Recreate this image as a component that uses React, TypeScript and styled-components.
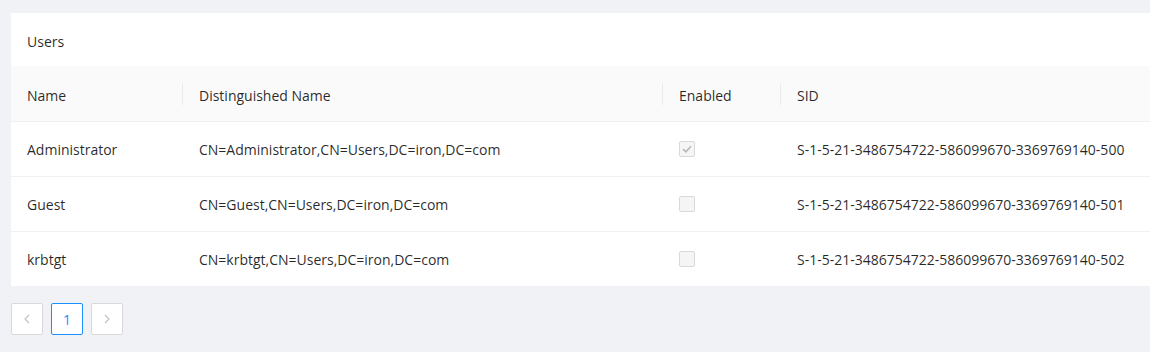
import * as React from 'react';
import styled, { createGlobalStyle } from 'styled-components';

type User = {
  name: string;
  dn: string;
  enabled: boolean;
  sid: string;
};

const users: User[] = [
  {
    name: 'Administrator',
    dn: 'CN=Administrator,CN=Users,DC=iron,DC=com',
    enabled: true,
    sid: 'S-1-5-21-3486754722-586099670-3369769140-500',
  },
  {
    name: 'Guest',
    dn: 'CN=Guest,CN=Users,DC=iron,DC=com',
    enabled: false,
    sid: 'S-1-5-21-3486754722-586099670-3369769140-501',
  },
  {
    name: 'krbtgt',
    dn: 'CN=krbtgt,CN=Users,DC=iron,DC=com',
    enabled: false,
    sid: 'S-1-5-21-3486754722-586099670-3369769140-502',
  },
];

const columns = [
  { title: 'Name', width: 172 },
  { title: 'Distinguished Name', width: 480 },
  { title: 'Enabled', width: 118 },
  { title: 'SID', width: 0 },
];

const GlobalStyle = createGlobalStyle`
  html, body {
    margin: 0;
    background: #f0f2f5;
  }
  body {
    font-family: "Open Sans", "Noto Sans", sans-serif;
    font-size: 14px;
    color: rgba(0, 0, 0, 0.85);
  }
`;

const App: React.FC = () => (
  <Page>
    <GlobalStyle />
    <Card.Container>
      <Card.Head>Users</Card.Head>
      <Table.Grid>
        <Table.HeadRow>
          {columns.map((col, idx) => (
            <Table.HeadCell
              key={`col-${idx}`}
              $width={col.width}
              $divider={idx > 0}
            >
              {col.title}
            </Table.HeadCell>
          ))}
        </Table.HeadRow>
        {users.map((user) => (
          <Table.Row key={user.sid}>
            <Table.Cell $width={columns[0].width}>{user.name}</Table.Cell>
            <Table.Cell $width={columns[1].width}>{user.dn}</Table.Cell>
            <Table.Cell $width={columns[2].width}>
              <Check.Box>
                {user.enabled && (
                  <svg width="10" height="8" viewBox="0 0 10 8">
                    <path
                      d="M1 4.2 L3.8 6.8 L9 1.2"
                      fill="none"
                      stroke="rgba(0,0,0,0.25)"
                      strokeWidth="1.6"
                    />
                  </svg>
                )}
              </Check.Box>
            </Table.Cell>
            <Table.Cell $width={columns[3].width}>{user.sid}</Table.Cell>
          </Table.Row>
        ))}
      </Table.Grid>
    </Card.Container>
    <Pager.Bar>
      <Pager.Item $disabled>
        <svg width="8" height="10" viewBox="0 0 8 10">
          <path d="M6 1 L2 5 L6 9" fill="none" stroke="currentColor" strokeWidth="1.1" />
        </svg>
      </Pager.Item>
      <Pager.Item $active>1</Pager.Item>
      <Pager.Item $disabled>
        <svg width="8" height="10" viewBox="0 0 8 10">
          <path d="M2 1 L6 5 L2 9" fill="none" stroke="currentColor" strokeWidth="1.1" />
        </svg>
      </Pager.Item>
    </Pager.Bar>
  </Page>
);

export default App;

const Page = styled.div`
  padding: 13px 0 0 11px;
`;

const Card = {
  Container: styled.div`
    background: #fff;
  `,
  Head: styled.div`
    height: 53px;
    box-sizing: border-box;
    padding: 5px 16px 0;
    display: flex;
    align-items: center;
    line-height: 22px;
  `,
};

const Table = {
  Grid: styled.div`
    display: flex;
    flex-direction: column;
  `,
  HeadRow: styled.div`
    display: flex;
    height: 56px;
    box-sizing: border-box;
    padding-top: 3px;
    background: #fafafa;
    border-bottom: 1px solid #f0f0f0;
  `,
  Row: styled.div`
    display: flex;
    height: 55px;
    box-sizing: border-box;
    border-bottom: 1px solid #f0f0f0;

    &:last-child {
      height: 54px;
      border-bottom: none;
    }
  `,
  HeadCell: styled.div<{ $width: number; $divider?: boolean }>`
    position: relative;
    box-sizing: border-box;
    flex: ${(p) => (p.$width ? `0 0 ${p.$width}px` : '1 1 auto')};
    display: flex;
    align-items: center;
    padding: 0 16px;

    &::before {
      content: '';
      display: ${(p) => (p.$divider ? 'block' : 'none')};
      position: absolute;
      left: -1px;
      top: calc(50% - 1px);
      width: 1px;
      height: 22px;
      transform: translateY(-50%);
      background: rgba(0, 0, 0, 0.06);
    }
  `,
  Cell: styled.div<{ $width: number }>`
    box-sizing: border-box;
    flex: ${(p) => (p.$width ? `0 0 ${p.$width}px` : '1 1 auto')};
    display: flex;
    align-items: center;
    padding: 0 16px;
    white-space: nowrap;
  `,
};

const Check = {
  Box: styled.span`
    width: 16px;
    height: 16px;
    box-sizing: border-box;
    border: 1px solid #d9d9d9;
    border-radius: 2px;
    background: #f5f5f5;
    display: flex;
    align-items: center;
    justify-content: center;
  `,
};

const Pager = {
  Bar: styled.div`
    display: flex;
    gap: 8px;
    margin-top: 17px;
  `,
  Item: styled.div<{ $active?: boolean; $disabled?: boolean }>`
    width: 32px;
    height: 32px;
    box-sizing: border-box;
    display: flex;
    align-items: center;
    justify-content: center;
    background: #fff;
    border: 1px solid ${(p) => (p.$active ? '#1890ff' : '#d9d9d9')};
    border-radius: 2px;
    color: ${(p) => (p.$active ? '#1890ff' : p.$disabled ? 'rgba(0, 0, 0, 0.25)' : 'inherit')};
  `,
};
